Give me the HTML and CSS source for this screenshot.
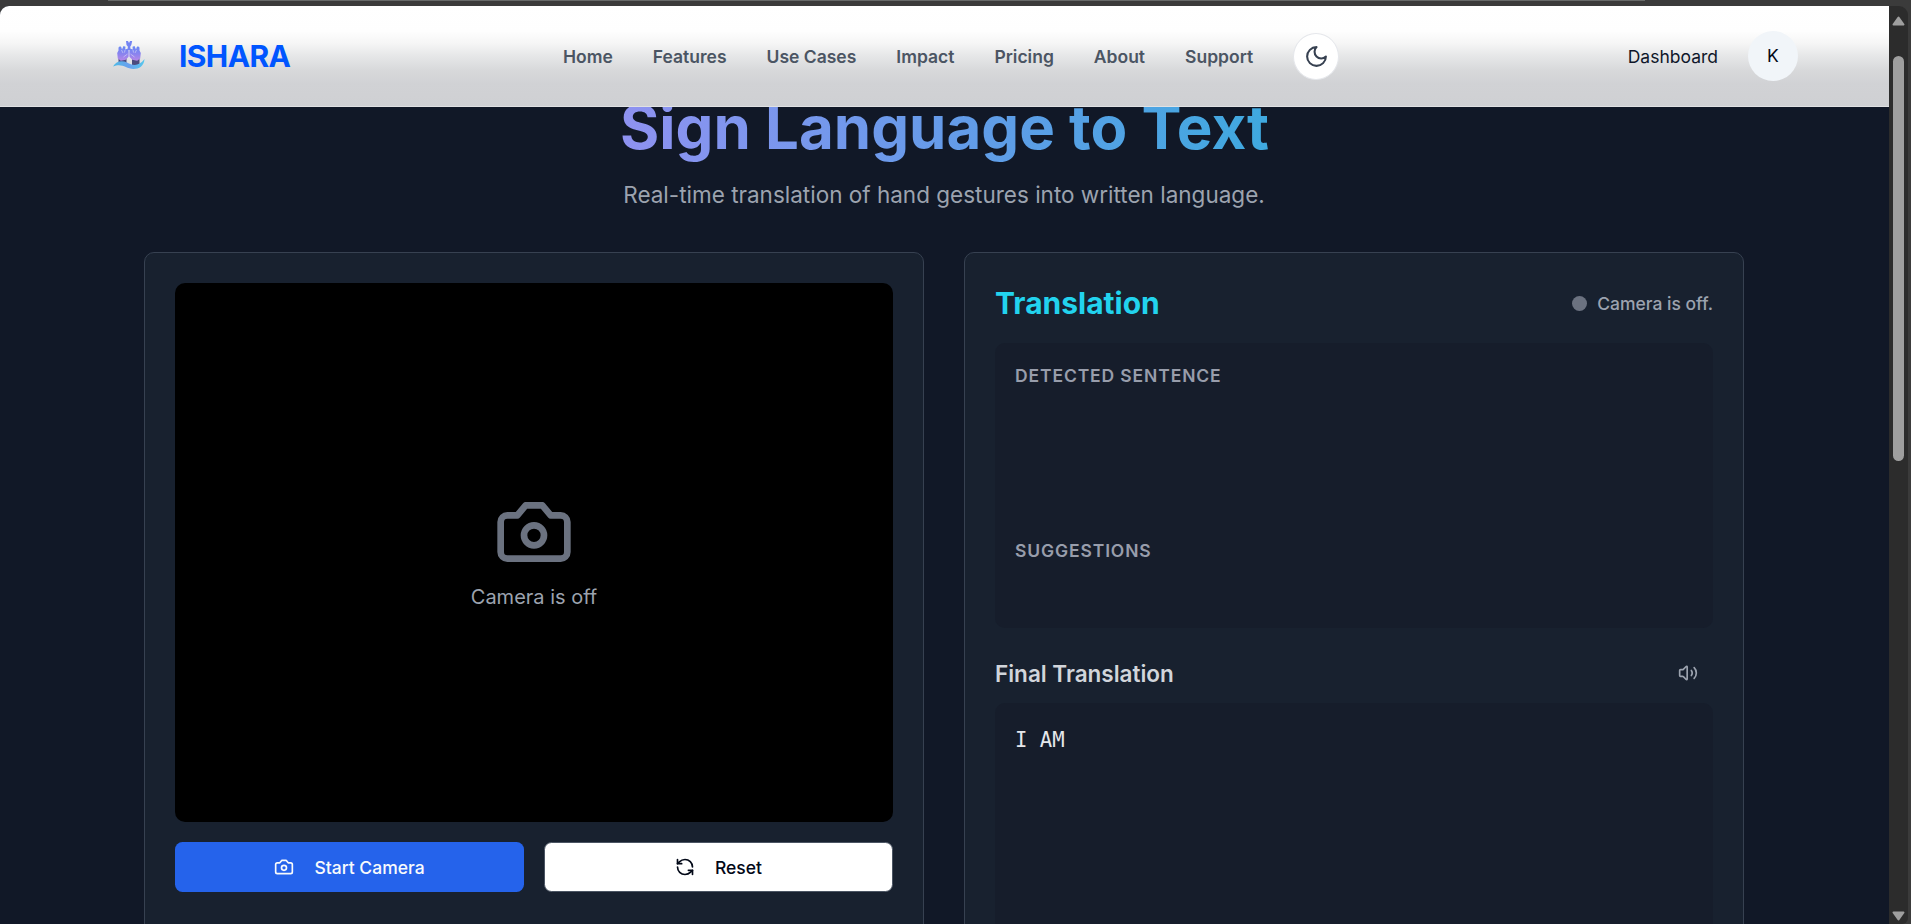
FILE: index.html
```html
<!DOCTYPE html>
<html lang="en">
<head>
<meta charset="utf-8">
<title>ISHARA</title>
<link rel="stylesheet" href="styles.css">
</head>
<body>
<div class="tabstrip"></div>
<div class="window">
  <div class="page">
    <header class="header">
      <a class="brand">
        <svg class="logo" viewBox="0 0 34 30">
          <defs>
            <linearGradient id="hand" x1="0" y1="0" x2="0" y2="1"><stop offset="0" stop-color="#6688f5"/><stop offset=".55" stop-color="#8b83ee"/><stop offset="1" stop-color="#b888e6"/></linearGradient>
            <linearGradient id="wave" x1="0" x2="1"><stop offset="0" stop-color="#4dbbe6"/><stop offset=".5" stop-color="#6aa0ee"/><stop offset="1" stop-color="#55c8ec"/></linearGradient>
          </defs>
          <path fill="#4b4b7d" d="M6.500 17h8v6h-8zM20 17h7.500v7H20z"/>
          <path fill="url(#hand)" d="M5.200 12l1.300-2.500V6.500L8 5.300l1.200.7.800 2.500L11.500 5l2 .8-.3 2.700L16 7.500l.8 3v5l-3 3.300-5 1-3-2.300zM28.800 12l-1.300-2.500V6.500L26 5.300l-1.200.7-.8 2.500L22.500 5l-2 .8.3 2.700L18 7.500l-.8 3v5l3 3.300 5 1 3-2.300z"/>
          <path fill="#7484f3" d="M14 0h2l1 2 1-2h2.200l-.9 4-1 1.500v3.500h-2.500V5.500L14.500 4z"/>
          <path stroke="#dcd9f7" stroke-width=".6" fill="none" d="M9.500 9l1.500 3M13 9l-.5 2.500M17 10v7M24.500 9L23 12M21 9l.5 2.500M11.500 16l4-3M22.500 16l-4-3"/>
          <path fill="url(#wave)" d="M1 25.500c3-5.500 9-6.500 14-4 6 3.500 12 4 17.500-3.500-.5 7-5.500 10-11 10-8-.5-11.500-6.500-20.500-2.500z"/>
        </svg>
        <span class="brand-name">ISHARA</span>
      </a>
      <nav class="nav">
        <a>Home</a><a>Features</a><a>Use Cases</a><a>Impact</a><a>Pricing</a><a>About</a><a>Support</a>
        <button class="theme"><svg class="icon moon" viewBox="0 0 24 24"><path d="M12 3a6 6 0 0 0 9 9 9 9 0 1 1-9-9Z"/></svg></button>
      </nav>
      <div class="account"><a>Dashboard</a><span class="avatar">K</span></div>
    </header>
    <main class="main">
      <h1 class="title">Sign Language to Text</h1>
      <p class="subtitle">Real-time translation of hand gestures into written language.</p>
      <div class="columns">
        <section class="card">
          <div class="video">
            <svg class="icon big" viewBox="0 0 24 24"><path d="M14.500 4h-5L7 7H4a2 2 0 0 0-2 2v9a2 2 0 0 0 2 2h16a2 2 0 0 0 2-2V9a2 2 0 0 0-2-2h-3l-2.500-3z"/><circle cx="12" cy="13" r="3"/></svg>
            <p class="video-text">Camera is off</p>
          </div>
          <div class="actions">
            <button class="btn primary"><svg class="icon" viewBox="0 0 24 24"><path d="M14.500 4h-5L7 7H4a2 2 0 0 0-2 2v9a2 2 0 0 0 2 2h16a2 2 0 0 0 2-2V9a2 2 0 0 0-2-2h-3l-2.500-3z"/><circle cx="12" cy="13" r="3"/></svg>Start Camera</button>
            <button class="btn outline"><svg class="icon" viewBox="0 0 24 24"><path d="M21 12a9 9 0 0 0-9-9 9.750 9.750 0 0 0-6.740 2.740L3 8"/><path d="M3 3v5h5"/><path d="M3 12a9 9 0 0 0 9 9 9.750 9.750 0 0 0 6.740-2.740L21 16"/><path d="M16 16h5v5"/></svg>Reset</button>
          </div>
        </section>
        <section class="card">
          <div class="card-head">
            <h2 class="card-title">Translation</h2>
            <div class="status"><span class="dot"></span>Camera is off.</div>
          </div>
          <div class="box detected">
            <h3 class="label">DETECTED SENTENCE</h3>
            <h3 class="label">SUGGESTIONS</h3>
          </div>
          <div class="final-head">
            <h3 class="final-title">Final Translation</h3>
            <svg class="icon speaker" viewBox="0 0 24 24"><path d="M11 4.702a.705.705 0 0 0-1.203-.498L6.413 7.587A1.400 1.400 0 0 1 5.416 8H3a1 1 0 0 0-1 1v6a1 1 0 0 0 1 1h2.416a1.400 1.400 0 0 1 .997.413l3.383 3.384A.705.705 0 0 0 11 19.298z"/><path d="M16 9a5 5 0 0 1 0 6"/><path d="M19.364 18.364a9 9 0 0 0 0-12.728"/></svg>
          </div>
          <div class="box output">I AM</div>
        </section>
      </div>
    </main>
  </div>
  <div class="scrollbar">
    <svg class="arrow" viewBox="0 0 13 10"><path d="M6.500 1.500L11.500 8.500h-10z"/></svg>
    <div class="thumb"></div>
    <svg class="arrow" viewBox="0 0 13 10"><path d="M6.500 8.500L11.500 1.500h-10z"/></svg>
  </div>
</div>
</body>
</html>
```

FILE: styles.css
```css
* { box-sizing: border-box; margin: 0; padding: 0; }
body {
  height: 924px;
  overflow: hidden;
  background: #3b3b3b;
  font-family: Inter, "Liberation Sans", sans-serif;
  font-size: 17.5px;
  line-height: 25px;
  display: flex;
  flex-direction: column;
}
button { font: inherit; border: 0; }
.icon {
  width: 20px;
  height: 20px;
  flex: none;
  fill: none;
  stroke: currentColor;
  stroke-width: 2;
  stroke-linecap: round;
  stroke-linejoin: round;
}
.tabstrip { height: 6px; flex: none; }
.tabstrip::before {
  content: "";
  display: block;
  height: 1px;
  margin: 0 266px 0 108px;
  background: #686a69;
}
.window { display: flex; height: 918px; }
.page {
  width: 1889px;
  height: 918px;
  overflow: hidden;
  border-top-left-radius: 9px;
  background: #111827;
}

/* Header */
.header {
  position: relative;
  z-index: 1;
  height: 101px;
  display: flex;
  align-items: center;
  justify-content: space-between;
  padding: 0 91px 0 112px;
  border-bottom: 1px solid #e0e1e3;
  background: linear-gradient(180deg, #fff 0, #fefefe 25px, #f6f6f6 37px, #e6e7e8 50px, #d7d8da 65px, #d1d2d5 78px, #cfd0d3 100px);
}
.brand { display: flex; align-items: center; width: 451px; }
.logo { width: 34px; height: 30px; margin-right: 33px; }
.brand-name {
  color: #0055ff;
  font-size: 30px;
  font-weight: 700;
  letter-spacing: -0.6px;
  line-height: 40px;
}
.nav {
  display: flex;
  flex: 1;
  align-items: center;
  gap: 40px;
  color: #4b5563;
  font-weight: 560;
}
.theme {
  width: 46px;
  height: 47px;
  display: flex;
  align-items: center;
  justify-content: center;
  border: 1px solid #e5e7eb;
  border-radius: 50%;
  background: #fff;
  color: #374151;
}
.moon { width: 25px; height: 25px; }
.account { display: flex; align-items: center; gap: 30px; color: #0f172a; font-weight: 430; }
.avatar {
  width: 50px;
  height: 50px;
  border-radius: 50%;
  background: #f1f5f9;
  text-align: center;
  line-height: 50px;
  color: #020817;
}

/* Content */
.main { width: 1600px; margin: -17px 0 0 144px; }
.title {
  font-size: 60px;
  line-height: 75px;
  font-weight: 700;
  text-align: center;
  width: 648px;
  margin: 0 auto;
  white-space: nowrap;
  color: transparent;
  background: linear-gradient(90deg, #8f92f1, #659be9 50%, #3fa9df);
  background-clip: text;
  -webkit-background-clip: text;
}
.subtitle {
  font-size: 22.5px;
  line-height: 35px;
  margin-top: 12px;
  text-align: center;
  color: #9ca3af;
}
.columns {
  display: grid;
  grid-template-columns: 1fr 1fr;
  gap: 40px;
  margin-top: 40px;
}
.card {
  height: 760px;
  padding: 30px;
  border: 1px solid #374151;
  border-radius: 10px;
  background: #18212f;
}
.video {
  height: 539px;
  border-radius: 10px;
  background: #000;
  display: flex;
  flex-direction: column;
  align-items: center;
  justify-content: center;
  padding-bottom: 2px;
}
.big { width: 80px; height: 80px; color: #6b7280; }
.video-text { font-size: 20px; line-height: 30px; margin-top: 10px; color: #9ca3af; }
.actions { display: grid; grid-template-columns: 1fr 1fr; gap: 20px; margin-top: 20px; }
.btn {
  height: 50px;
  display: flex;
  align-items: center;
  justify-content: center;
  gap: 20px;
  border-radius: 7.500px;
  font-weight: 530;
}
.primary { background: #2563eb; color: #f8fafc; }
.outline { background: #fff; color: #020817; border: 1px solid #4b5563; }

.card-head { display: flex; align-items: center; justify-content: space-between; height: 40px; }
.card-title { font-size: 30px; line-height: 40px; color: #22d3ee; }
.status { display: flex; align-items: center; gap: 10px; color: #9ca3af; font-weight: 500; }
.dot { width: 15px; height: 15px; border-radius: 50%; background: #6b7280; }
.box { border-radius: 10px; background: #161d2b; padding: 20px; }
.detected { height: 285px; margin-top: 20px; display: grid; grid-template-rows: 175px 1fr; }
.label { font-size: 17.5px; line-height: 25px; font-weight: 600; letter-spacing: 0.875px; color: #989dab; }
.final-head { display: flex; align-items: center; justify-content: space-between; height: 75px; padding: 20px 15px 5px 0; }
.final-title { font-size: 22.5px; font-weight: 600; line-height: 35px; color: #d1d5db; }
.speaker { color: #9ca3af; }
.output { height: 300px; color: #e5e7eb; font-family: "DejaVu Sans Mono", monospace; font-size: 20.6px; line-height: 35px; }

/* Scrollbar */
.scrollbar {
  width: 19px;
  height: 918px;
  display: flex;
  flex-direction: column;
  align-items: center;
  padding: 10px 0 3px;
  background: #2c2c2c;
  border-radius: 0 9px 6px 0;
}
.arrow { width: 13px; height: 10px; fill: #9f9f9f; stroke: #9f9f9f; stroke-width: 2; stroke-linejoin: round; }
.thumb { width: 11px; height: 405px; margin: 30px 0 auto; border-radius: 6px; background: #9f9f9f; }
```
